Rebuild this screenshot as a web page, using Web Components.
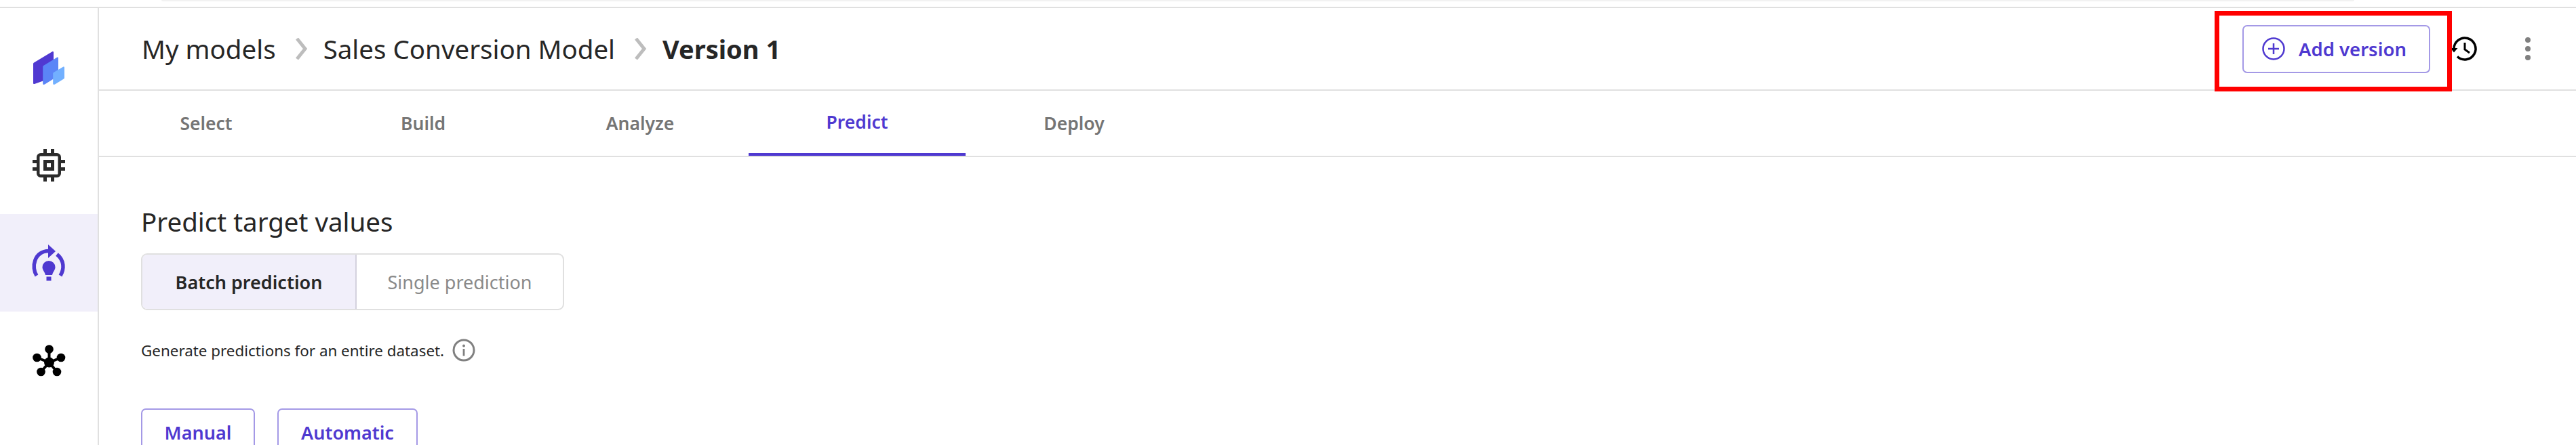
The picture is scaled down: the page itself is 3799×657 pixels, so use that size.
<!DOCTYPE html>
<html><head><meta charset="utf-8"><style>
html,body{margin:0;height:100%;overflow:hidden;background:#fff}
body{font-family:"Noto Sans","Open Sans",sans-serif;color:#262626}
</style></head><body>
<app-shell>
  <side-bar slot="side"></side-bar>
  <top-header slot="main"></top-header>
  <step-tabs slot="main"></step-tabs>
  <predict-panel slot="main"></predict-panel>
</app-shell>
<script>
function def(name,html){customElements.define(name,class extends HTMLElement{constructor(){super();this.attachShadow({mode:'open'}).innerHTML=html;}});}
def('app-shell',`<style>
:host{display:block;height:657px;overflow:hidden}
.strip{height:10px;position:relative}
.strip i{position:absolute;left:238px;right:327px;top:0;height:2px;background:#f2f2f2;border-radius:0 0 8px 8px}
.app{display:flex;border-top:2px solid #e0e0e0;height:645px}
.main{flex:1;min-width:0;display:flex;flex-direction:column}
::slotted(*){flex:none}
</style><div class="strip"><i></i></div><div class="app"><slot name="side"></slot><div class="main"><slot name="main"></slot></div></div>`);
def('side-bar',`<style>
:host{display:block;width:144px;flex:none;border-right:2px solid #e0e0e0;padding-top:16px;box-sizing:content-box}
div{height:144px;display:flex;align-items:center;justify-content:center}
.on{background:#f1effa}
svg{display:block;overflow:visible}
</style>
<div><svg width="48" height="52" viewBox="0 0 48 52"><path d="M2 18.500 29 2.200c1-.6 2-.1 2 1V40L3.500 49.800C2.500 50.400 1 50 1 49V20c0-.6.400-1.100 1-1.500z" fill="#5039d1"/><path d="M16 23 36 10.800c1-.6 2-.2 2 1V38L18 50.500c-2 1-2.800.3-2.800-1V25c0-1 .200-1.500.800-2z" fill="#5b85f7"/><path d="M31 33 45 24.700c1-.6 2-.2 2 1v15c0 .8-.3 1.300-1 1.700L33 50.500c-1.500.8-2.800.3-2.800-1V35c0-1 .2-1.500.800-2z" fill="#72b0ff"/></svg></div>
<div><svg width="48" height="48" viewBox="0 0 48 48" fill="#2b2b2b"><path d="M16 0h5v6h6V0h5v6h4a6 6 0 0 1 6 6v4h6v5h-6v6h6v5h-6v4a6 6 0 0 1-6 6h-4v6h-5v-6h-6v6h-5v-6h-4a6 6 0 0 1-6-6v-4H0v-5h6v-6H0v-5h6v-4a6 6 0 0 1 6-6h4zM11.500 10.500a1 1 0 0 0-1 1v25a1 1 0 0 0 1 1h25a1 1 0 0 0 1-1v-25a1 1 0 0 0-1-1z" fill-rule="evenodd"/><path d="M16 16h16v16H16zM21 21v6h6v-6z" fill-rule="evenodd"/></svg></div>
<div class="on"><svg width="50" height="54" viewBox="0 0 50 54" fill="none"><path d="M7 46C-1 34 3 10 25 9.500" stroke="#4f39d0" stroke-width="5.500"/><path d="M24 0 35 10 24 20z" fill="#4f39d0"/><path d="M37 14.500c11 9 11 22 5 31.500" stroke="#4f39d0" stroke-width="5.500"/><path d="M25 24a9.500 9.500 0 0 1 9.500 9.500c0 4-3.500 7-4.500 11.500h-10c-1-4.500-4.500-7.500-4.500-11.500A9.500 9.500 0 0 1 25 24zM21.500 47.500h7v6h-7z" fill="#4f39d0"/></svg></div>
<div><svg width="50" height="48" viewBox="0 0 50 48" fill="#000"><circle cx="25.500" cy="7.500" r="6.300"/><circle cx="7.500" cy="20" r="6.300"/><circle cx="43" cy="20" r="6.300"/><circle cx="13.500" cy="41" r="6.300"/><circle cx="37" cy="41" r="6.300"/><circle cx="25.500" cy="27" r="7.500"/><path d="M25.500 7.500V27M7.500 20 25.500 27 43 20M13.500 41 25.500 27 37 41" stroke="#000" stroke-width="4" fill="none"/></svg></div>`);
def('top-header',`<style>
:host{display:flex;align-items:center;height:120px;border-bottom:2px solid #e0e0e0;padding-left:63px;position:relative;font-size:38.5px;color:#262626}
.crumbs{display:flex;align-items:center;flex:1;white-space:nowrap}
.chev{margin:0 23px 0 28px;display:block}
b{font-weight:700;font-size:38px}
.btn{width:277px;height:71px;box-sizing:border-box;border:2px solid #a499e6;border-radius:7px;display:flex;align-items:center;padding-left:27px;gap:20px;color:#4f39d0;font-size:27.500px;font-weight:600;margin-right:31px}
.hist{margin-right:71px;display:block;overflow:visible}
.dots{margin-right:67px;display:flex;flex-direction:column;gap:5px}
.dots i{width:8px;height:8px;border-radius:50%;background:#808080}
.red{position:absolute;left:3120px;top:4px;width:350px;height:119px;box-sizing:border-box;border:7px solid #f00;pointer-events:none}
</style>
<div class="crumbs"><span>My models</span><svg class="chev" width="19" height="32" viewBox="0 0 19 32"><path d="M3 1 15 16 3 31" fill="none" stroke="#bdbdbd" stroke-width="5"/></svg><span>Sales Conversion Model</span><svg class="chev" width="19" height="32" viewBox="0 0 19 32"><path d="M3 1 15 16 3 31" fill="none" stroke="#bdbdbd" stroke-width="5"/></svg><b>Version 1</b></div>
<div class="btn"><svg width="34" height="34" viewBox="0 0 34 34" fill="none" stroke="#4f39d0" stroke-width="2.500"><circle cx="17" cy="17" r="15.500"/><path d="M17 9v16M9 17h16"/></svg><span>Add version</span></div>
<svg class="hist" width="38" height="38" viewBox="0 0 38 38" fill="none" stroke="#000" stroke-width="3.500"><path d="M4 19a16 16 0 1 1 5 11.600"/><path d="M-1 18 4 24.500 9.500 18z" fill="#000" stroke="none"/><path d="M20 10v10l7 5" stroke-width="3"/></svg>
<div class="dots"><i></i><i></i><i></i></div>
<div class="red"></div>`);
def('step-tabs',`<style>
:host{display:flex;height:96px;margin-left:-2px;padding-left:0;border-bottom:2px solid #e0e0e0;font-size:26.500px;font-weight:600;color:#757575}
div{width:320px;display:flex;align-items:center;justify-content:center;box-sizing:border-box}
.on{color:#4f39d0;border-bottom:4px solid #4f39d0}
</style><div>Select</div><div>Build</div><div>Analyze</div><div class="on">Predict</div><div>Deploy</div>`);
def('predict-panel',`<style>
:host{display:block;padding:70px 0 0 62px}
h2{margin:0;font-size:38.500px;font-weight:400;line-height:50px;color:#262626}
.seg{display:flex;width:624px;height:84px;margin-top:22px;box-sizing:border-box;border:2px solid #e0e0e0;border-radius:9px;overflow:hidden;font-size:27px}
.seg div{display:flex;align-items:center;justify-content:center}
.a{width:314px;background:#f1effa;font-weight:600;color:#262626;border-right:2px solid #d4d2de}
.b{flex:1;color:#8a8a8a}
.desc{display:flex;align-items:center;gap:12px;margin-top:42px;height:34px;font-size:22.400px}
.acts{display:flex;gap:33px;margin-top:69px}
.acts div{height:71px;box-sizing:border-box;border:2px solid #a499e6;border-radius:7px;display:flex;align-items:center;justify-content:center;color:#4f39d0;font-size:27px;font-weight:600}
</style>
<h2>Predict target values</h2>
<div class="seg"><div class="a">Batch prediction</div><div class="b">Single prediction</div></div>
<div class="desc"><span>Generate predictions for an entire dataset.</span><svg width="34" height="34" viewBox="0 0 34 34" fill="none" stroke="#808080"><circle cx="17" cy="17" r="15" stroke-width="3"/><path d="M17 15v10.500" stroke-width="2.800"/><circle cx="17" cy="10.500" r="2" fill="#808080" stroke="none"/></svg></div>
<div class="acts"><div style="width:168px">Manual</div><div style="width:207px">Automatic</div></div>`);
</script></body></html>
